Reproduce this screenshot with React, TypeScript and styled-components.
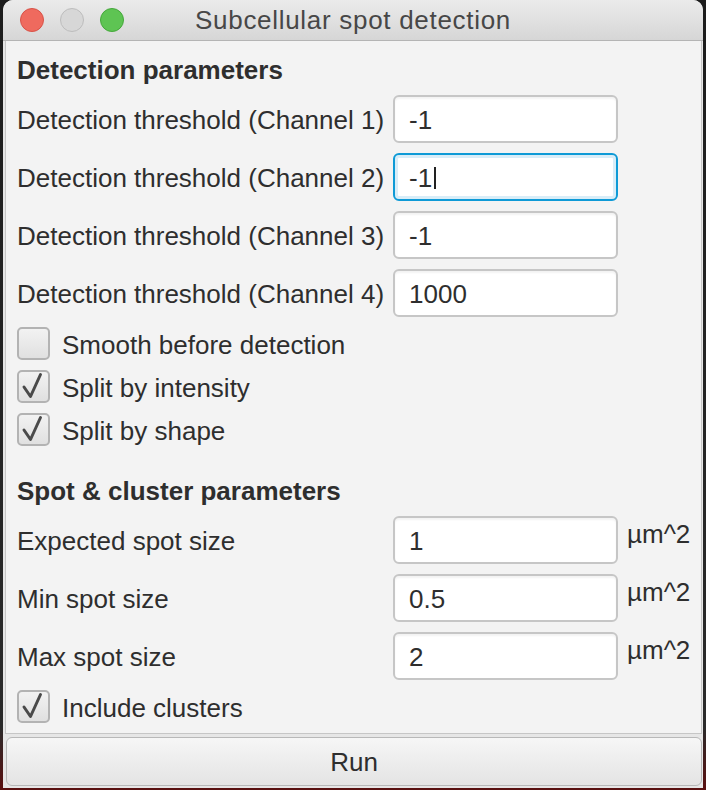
import React from "react";
import styled, { createGlobalStyle } from "styled-components";

const Global = createGlobalStyle`
  html, body { margin: 0; padding: 0; }
  body {
    background: linear-gradient(180deg, #1c1c1c 0%, #2a2a2a 92%, #5a1010 100%);
    font-family: "Liberation Sans", Arial, sans-serif;
    color: #333;
    height: 790px;
    overflow: hidden;
  }
`;

const Window = styled.div`
  width: 700px;
  height: 788px;
  margin-left: 3px;
  background: #e6e6e6;
  border-radius: 10px 10px 0 0;
  display: flex;
  flex-direction: column;
`;

const TitleBar = styled.div`
  position: relative;
  height: 40px;
  flex: none;
  border-radius: 10px 10px 0 0;
  background: linear-gradient(180deg, #ebebeb 0%, #d6d6d6 100%);
  border-bottom: 1px solid #b4b4b4;
  display: flex;
  align-items: center;
  justify-content: center;
`;

const Lights = styled.div`
  position: absolute;
  left: 17px;
  top: 8px;
  display: flex;
  gap: 16px;
`;

const Light = styled.span<{ $fill: string; $edge: string }>`
  width: 24px;
  height: 24px;
  border-radius: 50%;
  box-sizing: border-box;
  background: ${(p) => p.$fill};
  border: 1px solid ${(p) => p.$edge};
`;

const Title = styled.div`
  font-size: 26px;
  line-height: 40px;
  letter-spacing: 0.7px;
  color: #474747;
`;

const Panel = styled.div`
  margin: 0 1px 0 2px;
  padding: 14px 10px 10px 11px;
  background: #f3f3f3;
  border: 1px solid #c6c6c6;
  border-top: none;
  display: flex;
  flex-direction: column;
  gap: 10px;
`;

const Header = styled.div<{ $spaced?: boolean }>`
  font-weight: bold;
  font-size: 26px;
  line-height: 30px;
  height: 30px;
  color: #2e2e2e;
  margin-top: ${(p) => (p.$spaced ? "20px" : "0")};
`;

const Row = styled.div`
  display: flex;
  align-items: center;
  height: 48px;
`;

const Label = styled.div`
  width: 376px;
  flex: none;
  padding-top: 2px;
  font-size: 26px;
  line-height: 30px;
  white-space: nowrap;
  color: #2e2e2e;
`;

const Field = styled.div<{ $focused?: boolean }>`
  box-sizing: border-box;
  width: 225px;
  height: 48px;
  flex: none;
  background: #fff;
  border-radius: 6px;
  border: 2px solid ${(p) => (p.$focused ? "#0e9ad6" : "#c6c6c6")};
  box-shadow: ${(p) =>
    p.$focused
      ? "inset 0 0 0 3px #d8edf8"
      : "inset 0 2px 2px rgba(0,0,0,0.05)"};
  padding: 2px 0 0 14px;
  display: flex;
  align-items: center;
  font-size: 26px;
  line-height: 30px;
  color: #2e2e2e;
`;

const Caret = styled.span`
  display: inline-block;
  width: 2px;
  height: 22px;
  margin-left: 2px;
  background: #222;
`;

const Unit = styled.div`
  align-self: flex-start;
  margin-top: 3px;
  margin-left: 9px;
  font-size: 26px;
  line-height: 30px;
  color: #2e2e2e;
`;

const CheckRow = styled.div`
  display: flex;
  align-items: center;
  height: 33px;
  gap: 12px;
`;

const Box = styled.span`
  box-sizing: border-box;
  width: 33px;
  height: 33px;
  flex: none;
  border-radius: 5px;
  border: 2px solid #b3b3b3;
  background: linear-gradient(180deg, #f2f2f2 0%, #e0e0e0 100%);
  display: flex;
  align-items: center;
  justify-content: center;
`;

const CheckText = styled.span`
  padding-top: 2px;
  font-size: 26px;
  line-height: 30px;
  color: #2e2e2e;
  white-space: nowrap;
`;

const RunButton = styled.button`
  box-sizing: border-box;
  margin: 3px 1px 0 3px;
  height: 49px;
  border-radius: 6px;
  border: 1px solid #b8b8b8;
  background: linear-gradient(180deg, #f6f6f6 0%, #e4e4e4 100%);
  font-family: "Liberation Sans", Arial, sans-serif;
  font-size: 26px;
  color: #2e2e2e;
  padding: 2px 0 0;
`;

const Check = () => (
  <svg width="29" height="29" viewBox="0 0 29 29">
    <path
      d="M5 15 L11.5 24.5 L21.5 2.5"
      fill="none"
      stroke="#4a4a4a"
      strokeWidth="3"
      strokeLinecap="round"
      strokeLinejoin="round"
    />
  </svg>
);

const CheckItem = ({ label, checked }: { label: string; checked?: boolean }) => (
  <CheckRow>
    <Box>{checked && <Check />}</Box>
    <CheckText>{label}</CheckText>
  </CheckRow>
);

const thresholds = ["-1", "-1", "-1", "1000"];
const sizes = [
  ["Expected spot size", "1"],
  ["Min spot size", "0.5"],
  ["Max spot size", "2"],
];

export default function App() {
  return (
    <>
      <Global />
      <Window>
        <TitleBar>
          <Lights>
            <Light $fill="#ef6a5e" $edge="#d85248" />
            <Light $fill="#d7d7d7" $edge="#bdbdbd" />
            <Light $fill="#5ec453" $edge="#45a83b" />
          </Lights>
          <Title>Subcellular spot detection</Title>
        </TitleBar>
        <Panel>
          <Header>Detection parameters</Header>
          {thresholds.map((v, i) => (
            <Row key={i}>
              <Label>Detection threshold (Channel {i + 1})</Label>
              <Field $focused={i === 1}>
                {v}
                {i === 1 && <Caret />}
              </Field>
            </Row>
          ))}
          <CheckItem label="Smooth before detection" />
          <CheckItem label="Split by intensity" checked />
          <CheckItem label="Split by shape" checked />
          <Header $spaced>Spot &amp; cluster parameters</Header>
          {sizes.map(([l, v]) => (
            <Row key={l}>
              <Label>{l}</Label>
              <Field>{v}</Field>
              <Unit>µm^2</Unit>
            </Row>
          ))}
          <CheckItem label="Include clusters" checked />
        </Panel>
        <RunButton>Run</RunButton>
      </Window>
    </>
  );
}
